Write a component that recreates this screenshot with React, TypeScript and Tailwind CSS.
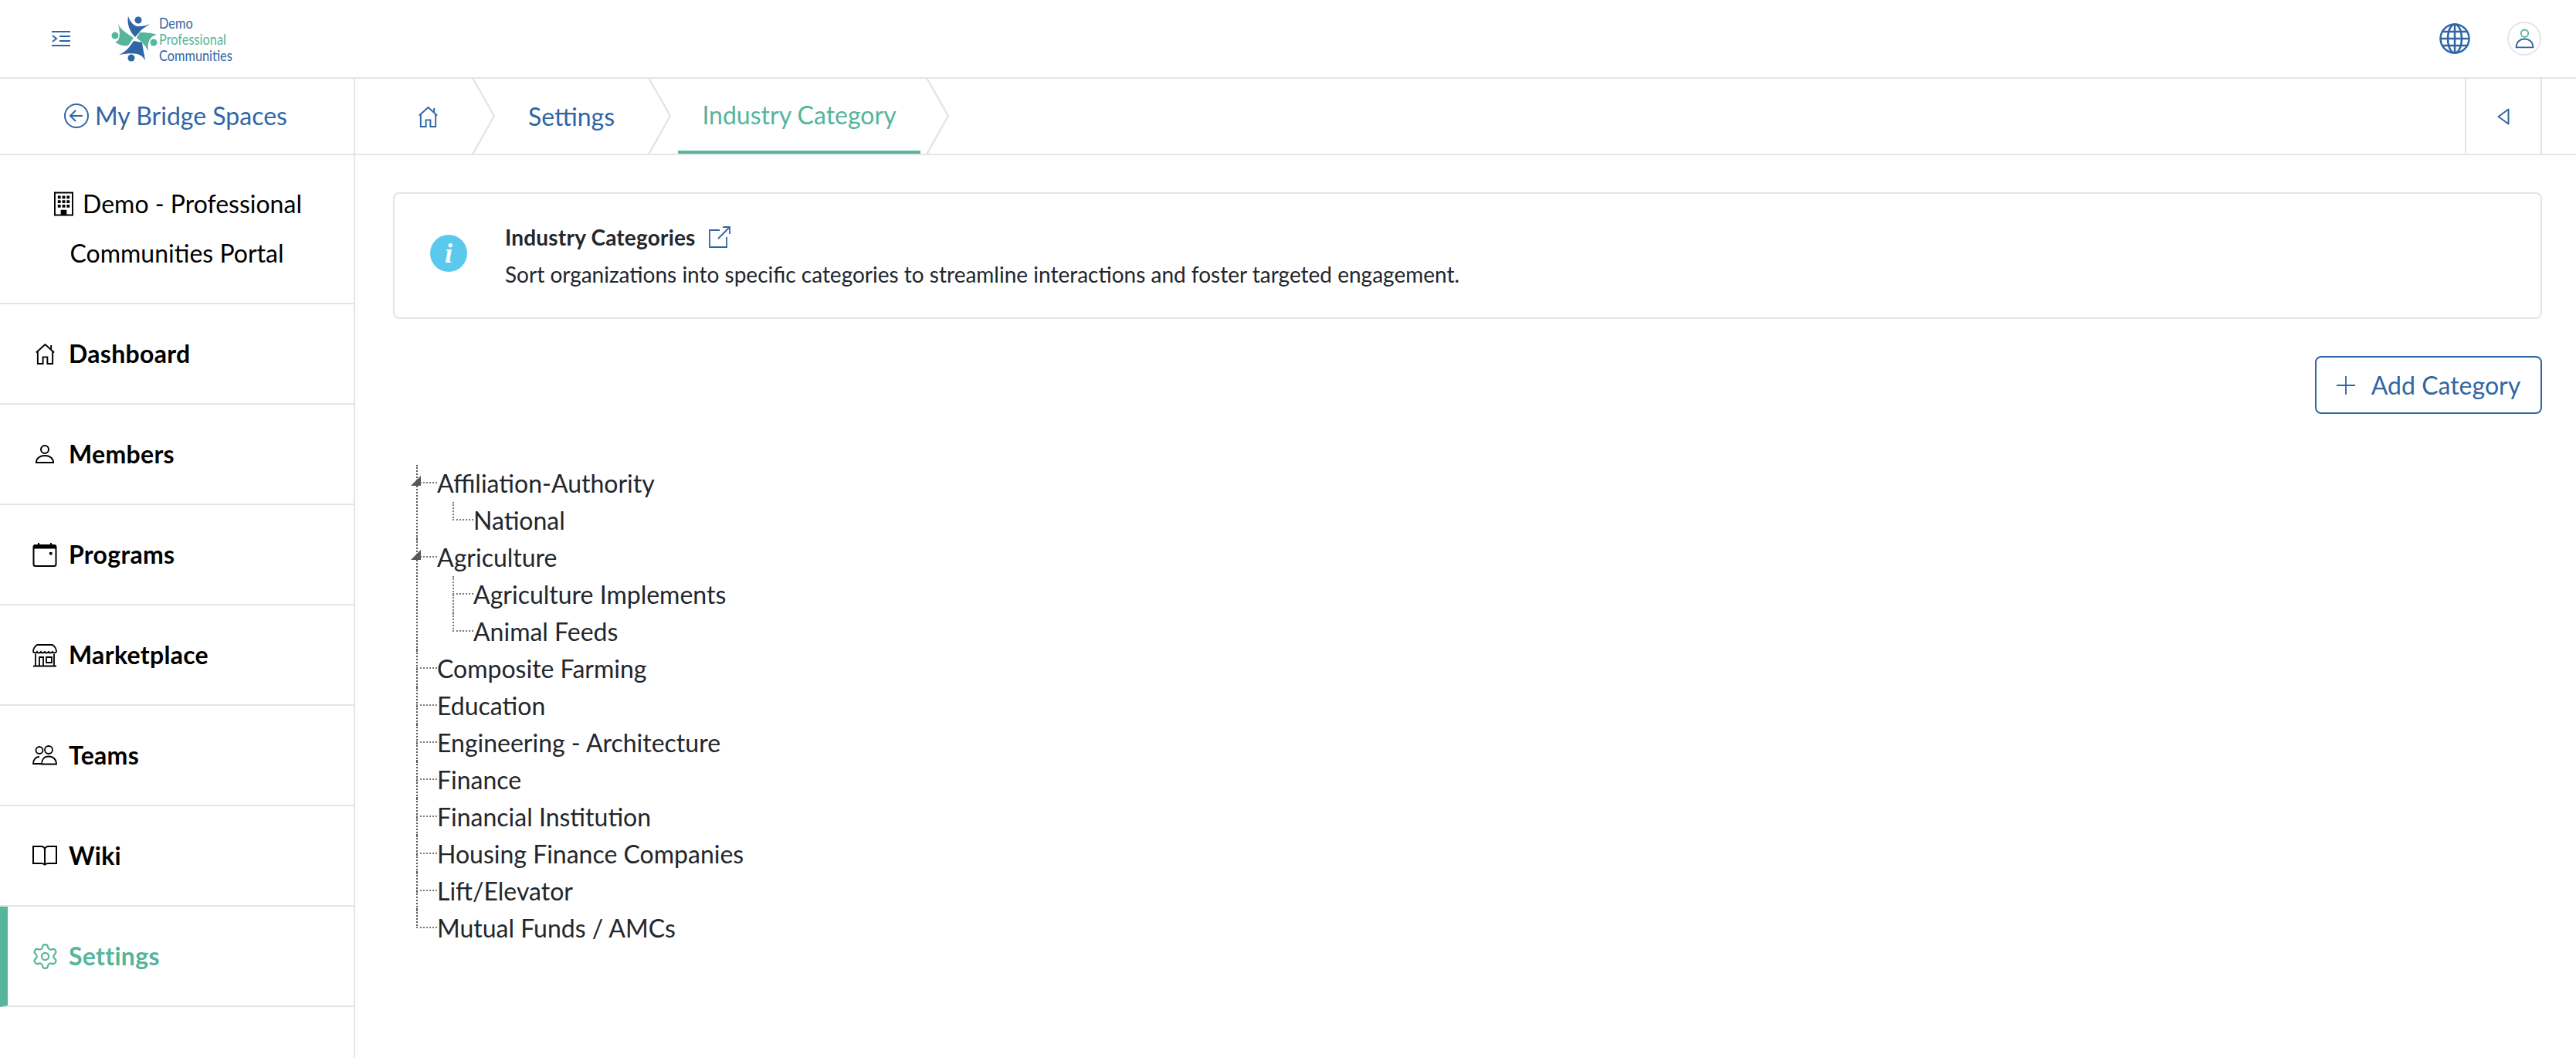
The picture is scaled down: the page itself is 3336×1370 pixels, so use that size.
import { FC, JSX, ReactNode } from 'react';
import { Settings } from 'lucide-react';

const BLUE = '#2f66a5';

const HomeIcon: FC<{ className?: string }> = ({ className }) => (
  <svg viewBox="0 0 28 29" fill="none" stroke="currentColor" strokeWidth="2" className={className}>
    <path d="M2 13 14 2l12 11M4 11v17h7v-9h6v9h7V11M22 3v5" />
  </svg>
);

const PersonIcon: FC<{ className?: string }> = ({ className }) => (
  <svg viewBox="0 0 26 26" fill="none" stroke="currentColor" strokeWidth="2" className={className}>
    <circle cx="13" cy="7" r="5" />
    <path d="M2 24c0-6 5-9 11-9s11 3 11 9z" />
  </svg>
);

const CalendarIcon: FC<{ className?: string }> = ({ className }) => (
  <svg viewBox="0 0 32 32" fill="none" stroke="currentColor" strokeWidth="2" className={className}>
    <rect x="1.5" y="4" width="29" height="27" rx="2.5" />
    <path d="M1.5 6.5h29" strokeWidth="4" />
    <path d="M8 1v4M24 1v4" />
    <rect x="22" y="13" width="3.5" height="3.5" fill="currentColor" stroke="none" />
  </svg>
);

const StoreIcon: FC<{ className?: string }> = ({ className }) => (
  <svg viewBox="0 0 32 32" fill="none" stroke="currentColor" strokeWidth="1.8" className={className}>
    <path d="M6 3h20c3 2 5 5 5 9-2 2-4 2-5 0-2 2-4 2-5 0-2 2-4 2-5 0-2 2-4 2-5 0-2 2-4 2-5 0-1 2-3 2-5 0 0-4 2-7 5-9z" />
    <path d="M4 15v15M28 15v15M1 30.500h30M9 30V19h5v11M18 19h7v7h-7z" />
  </svg>
);

const TeamsIcon: FC<{ className?: string }> = ({ className }) => (
  <svg viewBox="0 0 32 26" fill="none" stroke="currentColor" strokeWidth="1.8" className={className}>
    <circle cx="9" cy="6.500" r="4.500" />
    <circle cx="21" cy="6" r="5" />
    <path d="M12 24H1c0-5 3-9 8-9M12 24.500h19c0-6-4-10-10-10s-9 4-9 10z" />
  </svg>
);

const BookIcon: FC<{ className?: string }> = ({ className }) => (
  <svg viewBox="0 0 32 28" fill="none" stroke="currentColor" strokeWidth="2" className={className}>
    <path d="M1 2h10c3 0 5 2 5 4v20c-1-2-3-2-5-2H1zM31 2H21c-3 0-5 2-5 4v20c1-2 3-2 5-2h10z" />
  </svg>
);

const LogoMark: FC = () => (
  <svg viewBox="20 14 68 66" className="w-[68px] h-[66px]">
    <g fill="#2f66a5">
      <circle cx="58" cy="23" r="4.500" />
      <circle cx="49" cy="72" r="4.500" />
      <path d="M45 18C48 27 54 32 60 31C65 31 69 30 73 28C68 32 63 34 61 37L54 45C47 38 43 28 45 18Z" />
      <path d="M33 68C40 65 46 60 52 50L63 52C64 60 66 68 67 75C62 67 56 64 33 68Z" />
    </g>
    <g fill="#56b59b">
      <circle cx="28" cy="43" r="4.500" />
      <circle cx="78" cy="52" r="4.500" />
      <path d="M32 28C35 35 43 40 52 46L45 56C38 57 32 55 28 51C33 51 36 44 32 28Z" />
      <path d="M82 42C74 39 66 39 60 39L56 46C62 51 68 56 71 64C70 55 71 44 82 42Z" />
    </g>
  </svg>
);

const Chevron: FC = () => (
  <svg viewBox="0 0 30 99" fill="none" stroke="#e2e5ea" strokeWidth="2.500" className="w-[30px] h-[99px] shrink-0">
    <path d="M1 0 29 49 1 99" />
  </svg>
);

const navItems: { label: string; icon: ReactNode; active?: boolean }[] = [
  { label: 'Dashboard', icon: <HomeIcon className="w-[27px] h-[28px]" /> },
  { label: 'Members', icon: <PersonIcon className="w-[26px] h-[26px]" /> },
  { label: 'Programs', icon: <CalendarIcon className="w-[32px] h-[32px]" /> },
  { label: 'Marketplace', icon: <StoreIcon className="w-[32px] h-[32px]" /> },
  { label: 'Teams', icon: <TeamsIcon className="w-[32px] h-[26px]" /> },
  { label: 'Wiki', icon: <BookIcon className="w-[32px] h-[28px]" /> },
  { label: 'Settings', icon: <Settings className="w-[37px] h-[37px] shrink-0" strokeWidth={1.4} />, active: true },
];

type TreeEntry = { label: string; children?: string[] };

const tree: TreeEntry[] = [
  { label: 'Affiliation-Authority', children: ['National'] },
  { label: 'Agriculture', children: ['Agriculture Implements', 'Animal Feeds'] },
  { label: 'Composite Farming' },
  { label: 'Education' },
  { label: 'Engineering - Architecture' },
  { label: 'Finance' },
  { label: 'Financial Institution' },
  { label: 'Housing Finance Companies' },
  { label: 'Lift/Elevator' },
  { label: 'Mutual Funds / AMCs' },
];

const TreeRow: FC<{ last: boolean; expanded?: boolean; nested?: boolean; children: ReactNode }> = ({ last, expanded, nested, children }) => (
  <li className="flex">
    <div className="relative flex flex-col shrink-0 w-[27px]">
      <div className={`h-[24px] border-l-2 border-b-2 border-dotted ${nested ? 'border-l-[#777a7f]' : 'border-l-[#55585c]'} border-b-[#777a7f]`} />
      {!last && <div className={`flex-1 border-l-2 border-dotted ${nested ? 'border-[#777a7f]' : 'border-[#55585c]'}`} />}
      {expanded && (
        <svg viewBox="0 0 14 14" className="absolute left-[-8px] top-[14px] w-[16px] h-[14px]">
          <path d="M0 13 13 0v13z" fill="#55585c" />
        </svg>
      )}
    </div>
    {children}
  </li>
);

const App: FC = (): JSX.Element => {
  return (
    <div className="flex flex-col h-screen overflow-hidden bg-white text-black font-['Lato',sans-serif]">
      <header className="flex items-center justify-between h-[102px] shrink-0 border-b-2 border-[#e2e5ea]">
        <div className="flex items-center">
          <svg viewBox="0 0 24 20" fill="none" stroke={BLUE} strokeWidth="2" className="ml-[67px] w-[24px] h-[20px]">
            <path d="M0 1h24M10 7h14M10 13h14M0 19h24M1 6l5 4-5 4" />
          </svg>
          <div className="ml-[50px]"><LogoMark /></div>
          <div className="ml-[-3px] flex flex-col origin-left scale-x-[0.86] text-[19px] leading-[21px] text-[#2f66a5]">
            <span>Demo</span>
            <span className="text-[#56b59b]">Professional</span>
            <span>Communities</span>
          </div>
        </div>
        <div className="flex items-center mr-[45px]">
          <svg viewBox="0 0 40 40" fill="none" stroke={BLUE} strokeWidth="2.500" className="w-[40px] h-[40px]">
            <circle cx="20" cy="20" r="18.500" />
            <ellipse cx="20" cy="20" rx="9" ry="18.500" />
            <path d="M20 1.500v37M1.500 20h37M4 11h32M4 29h32" />
          </svg>
          <div className="ml-[48px] flex items-center justify-center w-[44px] h-[44px] rounded-full border-2 border-[#e2e5ea]">
            <svg viewBox="0 0 26 26" fill="none" strokeWidth="1.800" className="w-[27px] h-[27px]">
              <circle cx="13" cy="6" r="4.500" stroke="#56b59b" />
              <path d="M2.500 23.500c0-7 5-10.500 10.500-10.500s10.500 3.500 10.500 10.500z" stroke={BLUE} />
            </svg>
          </div>
        </div>
      </header>

      <div className="flex flex-1 min-h-0">
        <aside className="w-[460px] shrink-0 border-r-2 border-[#e2e5ea]">
          <div className="flex items-center h-[99px] pl-[83px] pb-[2px] gap-[8px] border-b-2 border-[#e2e5ea] text-[#2f66a5] text-[32px]">
            <svg viewBox="0 0 32 32" fill="none" stroke="currentColor" strokeWidth="2" className="w-[32px] h-[32px]">
              <circle cx="16" cy="16" r="15" />
              <path d="M24 16H9M15 9l-7 7 7 7" />
            </svg>
            My Bridge Spaces
          </div>
          <div className="flex flex-col justify-center items-center h-[193px] pb-[1px] border-b-2 border-[#e2e5ea] text-[32px] leading-[64px]">
            <div className="flex items-center gap-[12px] pl-[3px]">
              <svg viewBox="0 0 26 32" className="w-[25px] h-[32px]">
                <path fillRule="evenodd" d="M0 0h26v32H0zM2 2v28h7v-6h8v6h7V2zM5 5h4v4H5zM11 5h4v4h-4zM17 5h4v4h-4zM5 11h4v4H5zM11 11h4v4h-4zM17 11h4v4h-4zM5 17h4v4H5zM11 17h4v4h-4zM17 17h4v4h-4z" />
              </svg>
              Demo - Professional
            </div>
            <div>Communities Portal</div>
          </div>
          <nav>
            {navItems.map((item) => (
              <div
                key={item.label}
                className={`flex items-center h-[130px] border-b-2 border-[#e2e5ea] ${item.active ? 'text-[#56b59b] border-l-[10px] border-l-[#56b59b]' : ''}`}
              >
                <div className={`flex justify-center w-[32px] shrink-0 ${item.active ? 'ml-[32px]' : 'ml-[42px]'}`}>{item.icon}</div>
                <span className="ml-[15px] text-[32px] tracking-[0.3px] font-bold">{item.label}</span>
              </div>
            ))}
          </nav>
        </aside>

        <main className="flex-1 min-w-0">
          <div className="flex items-stretch justify-between h-[99px] border-b-2 border-[#e2e5ea]">
            <div className="flex items-center text-[32px]">
              <div className="flex items-center w-[151px] pl-[81px] text-[#2f66a5]">
                <HomeIcon className="w-[27px] h-[28px]" />
              </div>
              <Chevron />
              <div className="flex items-center justify-center w-[198px] text-[#2f66a5]">Settings</div>
              <Chevron />
              <div className="flex items-center justify-center self-stretch w-[330px] pl-[9px] pr-[7px]">
                <div className="flex items-center justify-center h-full w-full border-b-4 border-[#56b59b] text-[#56b59b]">Industry Category</div>
              </div>
              <Chevron />
            </div>
            <div className="flex items-center justify-center w-[100px] mr-[44px] border-x-2 border-[#e2e5ea]">
              <svg viewBox="0 0 16 22" fill="none" stroke={BLUE} strokeWidth="2" strokeLinejoin="round" className="w-[16px] h-[22px]">
                <path d="M14.500 1.500v19L1.500 11z" />
              </svg>
            </div>
          </div>

          <div className="pt-[48px] pl-[49px] pr-[44px]">
            <div className="flex items-center h-[164px] rounded-lg border-2 border-[#e2e5ea]">
              <div className="flex items-center justify-center mb-[6px] ml-[46px] w-[48px] h-[48px] rounded-full bg-[#5bc8ee] text-white text-[36px] font-bold italic font-['Liberation_Serif',serif]">i</div>
              <div className="ml-[49px]">
                <div className="flex items-center text-[28px] tracking-[0.2px] font-bold text-[#23262b]">
                  Industry Categories
                  <svg viewBox="0 0 28 28" fill="none" stroke={BLUE} strokeWidth="1.800" className="ml-[17px] w-[28px] h-[28px]">
                    <path d="M14 5H1v22h22V14M12 16 27 1M18 1h9v9" />
                  </svg>
                </div>
                <p className="mt-[6px] text-[28px] text-[#23262b]">Sort organizations into specific categories to streamline interactions and foster targeted engagement.</p>
              </div>
            </div>

            <div className="flex justify-end mt-[48px]">
              <button className="flex items-center justify-center gap-[21px] w-[294px] h-[75px] rounded-lg border-2 border-[#2f66a5] text-[#2f66a5] text-[32px]">
                <svg viewBox="0 0 24 24" fill="none" stroke="currentColor" strokeWidth="1.800" className="w-[24px] h-[24px]">
                  <path d="M12 0v24M0 12h24" />
                </svg>
                Add Category
              </button>
            </div>

            <ul className="mt-[66px] ml-[30px] text-[32px] text-[#23262b]">
              {tree.map((entry, i) => (
                <TreeRow key={entry.label} last={i === tree.length - 1} expanded={!!entry.children}>
                  <div>
                    <div className="flex items-center h-[48px]">{entry.label}</div>
                    {entry.children && (
                      <ul className="ml-[20px]">
                        {entry.children.map((child, j) => (
                          <TreeRow key={child} nested last={j === entry.children!.length - 1}>
                            <div className="flex items-center h-[48px]">{child}</div>
                          </TreeRow>
                        ))}
                      </ul>
                    )}
                  </div>
                </TreeRow>
              ))}
            </ul>
          </div>
        </main>
      </div>
    </div>
  );
};

export default App;
